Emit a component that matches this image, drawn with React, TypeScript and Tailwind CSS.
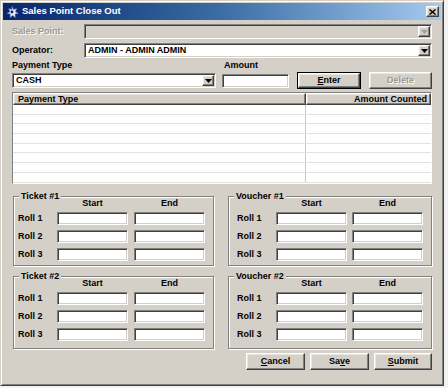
import React from "react";

const sunken =
  "border border-t-[#808080] border-l-[#808080] border-b-white border-r-white shadow-[inset_1px_1px_0_#404040,inset_-1px_-1px_0_#d4d0c8]";
const raised =
  "border border-t-white border-l-white border-r-[#404040] border-b-[#404040] shadow-[inset_-1px_-1px_0_#808080,inset_1px_1px_0_#e8e6e0] bg-[#d4d0c8]";

function Arrow({ disabled }: { disabled?: boolean }) {
  return (
    <div className={`w-[12px] h-[11px] mr-[1px] flex items-center justify-center ${raised}`}>
      <svg width="7" height="4" viewBox="0 0 7 4">
        <path d="M0 0h7L3.5 4z" fill={disabled ? "#a0a0a0" : "#000"} />
      </svg>
    </div>
  );
}

function Combo({ value, disabled, className }: { value?: string; disabled?: boolean; className: string }) {
  return (
    <div className={`flex items-center h-[15px] ${sunken} ${disabled ? "bg-[#d4d0c8]" : "bg-white"} ${className}`}>
      <span className="flex-1 pl-[3px] text-[9px] font-bold leading-none">{value}</span>
      <Arrow disabled={disabled} />
    </div>
  );
}

function Field({ className }: { className: string }) {
  return <div className={`bg-white ${sunken} ${className}`} />;
}

function Button({ children, disabled, def, className }: { children: React.ReactNode; disabled?: boolean; def?: boolean; className: string }) {
  const inner = (
    <div
      className={`flex-1 flex items-center justify-center text-[9px] font-bold ${raised} ${
        disabled ? "text-[#9a9890] [text-shadow:1px_1px_0_#fff]" : "text-black"
      }`}
    >
      {children}
    </div>
  );
  return <div className={`flex h-[17px] ${def ? "border border-black" : ""} ${className}`}>{inner}</div>;
}

function Group({ title, box, grid }: { title: string; box: string; grid: string }) {
  return (
    <div className={`relative border border-[#808080] shadow-[inset_1px_1px_0_#fff,1px_1px_0_#fff] ${box}`}>
      <span className="absolute -top-[6px] left-[5px] px-[2px] bg-[#d4d0c8] text-[9px] font-bold leading-[10px]">
        {title}
      </span>
      <div className={`grid items-center pt-[1px] ${grid}`}>
        <span />
        <span className="text-center text-[9px] font-bold leading-[10px]">Start</span>
        <span className="text-center text-[9px] font-bold leading-[10px]">End</span>
      </div>
      <div className={`grid items-center mt-[4px] gap-y-[5px] ${grid}`}>
        {["Roll 1", "Roll 2", "Roll 3"].map((r) => (
          <React.Fragment key={r}>
            <span className="text-[9px] font-bold leading-none">{r}</span>
            <Field className="h-[13px]" />
            <Field className="h-[13px]" />
          </React.Fragment>
        ))}
      </div>
    </div>
  );
}

export default function App() {
  return (
    <div className="w-[448px] h-[388px] bg-[#f2f2f2] font-['Liberation_Sans',Arial,sans-serif] text-black">
      <div className="w-[444px] h-[386px] bg-[#d4d0c8] border border-t-[#d4d0c8] border-l-[#d4d0c8] border-r-[#404040] border-b-[#404040] shadow-[inset_1px_1px_0_#fff,inset_-1px_-1px_0_#808080] p-[2px] flex flex-col">
        {/* title bar */}
        <div className="h-[17px] flex items-center bg-linear-to-r from-[#0a246a] via-[#3a6ea5] to-[#a6caf0] pl-[2px] pr-[2px]">
          <svg width="14" height="12" viewBox="0 0 14 12" className="mr-[3px]">
            <path d="M7 0.5l1.4 3 3.2-.8-1.3 3 2.9 1.6-3.2.8.3 3.3-2.6-2-2.6 2 .3-3.3-3.2-.8 2.9-1.6-1.3-3 3.2.8z" fill="#e8eefc" stroke="#6f88c8" strokeWidth="0.6" />
            <circle cx="7" cy="6" r="1.4" fill="#0a246a" />
          </svg>
          <span className="flex-1 text-white text-[9.5px] font-bold">Sales Point Close Out</span>
          <div className={`w-[13px] h-[11px] flex items-center justify-center ${raised}`}>
            <svg width="7" height="6" viewBox="0 0 7 6">
              <path d="M0.5 0.5l6 5M6.5 0.5l-6 5" stroke="#000" strokeWidth="1.5" />
            </svg>
          </div>
        </div>

        <div className="flex flex-col px-[9px]">
          <div className="flex items-center mt-[4px]">
            <span className="w-[72px] text-[9px] font-bold text-[#9a9890] [text-shadow:1px_1px_0_#fff]">Sales Point:</span>
            <Combo disabled className="flex-1" />
          </div>
          <div className="flex items-center mt-[4px]">
            <span className="w-[72px] text-[9px] font-bold">Operator:</span>
            <Combo value="ADMIN - ADMIN ADMIN" className="flex-1" />
          </div>
          <div className="flex items-center h-[10px] mt-[3px] text-[9px] font-bold">
            <span className="w-[212px]">Payment Type</span>
            <span>Amount</span>
          </div>
          <div className="flex items-center h-[17px] mt-[1px]">
            <Combo value="CASH" className="w-[204px]" />
            <Field className="w-[67px] h-[14px] ml-[6px]" />
            <Button def className="w-[64px] ml-[8px]">
              <span>
                <u>E</u>nter
              </span>
            </Button>
            <Button disabled className="w-[63px] ml-[8px]">
              Delete
            </Button>
          </div>

          {/* table */}
          <div className={`mt-[3px] h-[92px] bg-white flex flex-col ${sunken} shadow-none`}>
            <div className="flex h-[12px] shrink-0 text-[9px] font-bold leading-none">
              <div className={`w-[293px] flex items-center pl-[4px] ${raised}`}>Payment Type</div>
              <div className={`flex-1 flex items-center justify-end pr-[3px] ${raised}`}>Amount Counted</div>
            </div>
            {Array.from({ length: 8 }).map((_, i) => (
              <div key={i} className="flex h-[9.7px] shrink-0 border-b border-[#e2e2e2]">
                <div className="w-[293px] border-r border-[#c8c8c8]" />
                <div className="flex-1" />
              </div>
            ))}
          </div>

          <div className="flex mt-[12px] gap-[14px]">
            <Group title="Ticket #1" box="w-[201px] h-[70px] ml-[1px]" grid="grid-cols-[33px_71px_71px] gap-x-[6px] pl-[4px]" />
            <Group title="Voucher #1" box="w-[204px] h-[70px]" grid="grid-cols-[34px_71px_71px] gap-x-[5px] pl-[8px]" />
          </div>
          <div className="flex mt-[10px] gap-[14px]">
            <Group title="Ticket #2" box="w-[201px] h-[73px] ml-[1px]" grid="grid-cols-[33px_71px_71px] gap-x-[6px] pl-[4px]" />
            <Group title="Voucher #2" box="w-[204px] h-[73px]" grid="grid-cols-[34px_71px_71px] gap-x-[5px] pl-[8px]" />
          </div>

          <div className="flex justify-end gap-[5px] mt-[4px]">
            <Button className="w-[59px] h-[16px]">
              <span>
                <u>C</u>ancel
              </span>
            </Button>
            <Button className="w-[59px] h-[16px]">
              <span>
                Sa<u>v</u>e
              </span>
            </Button>
            <Button className="w-[58px] h-[16px]">
              <span>
                <u>S</u>ubmit
              </span>
            </Button>
          </div>
        </div>
      </div>
    </div>
  );
}
